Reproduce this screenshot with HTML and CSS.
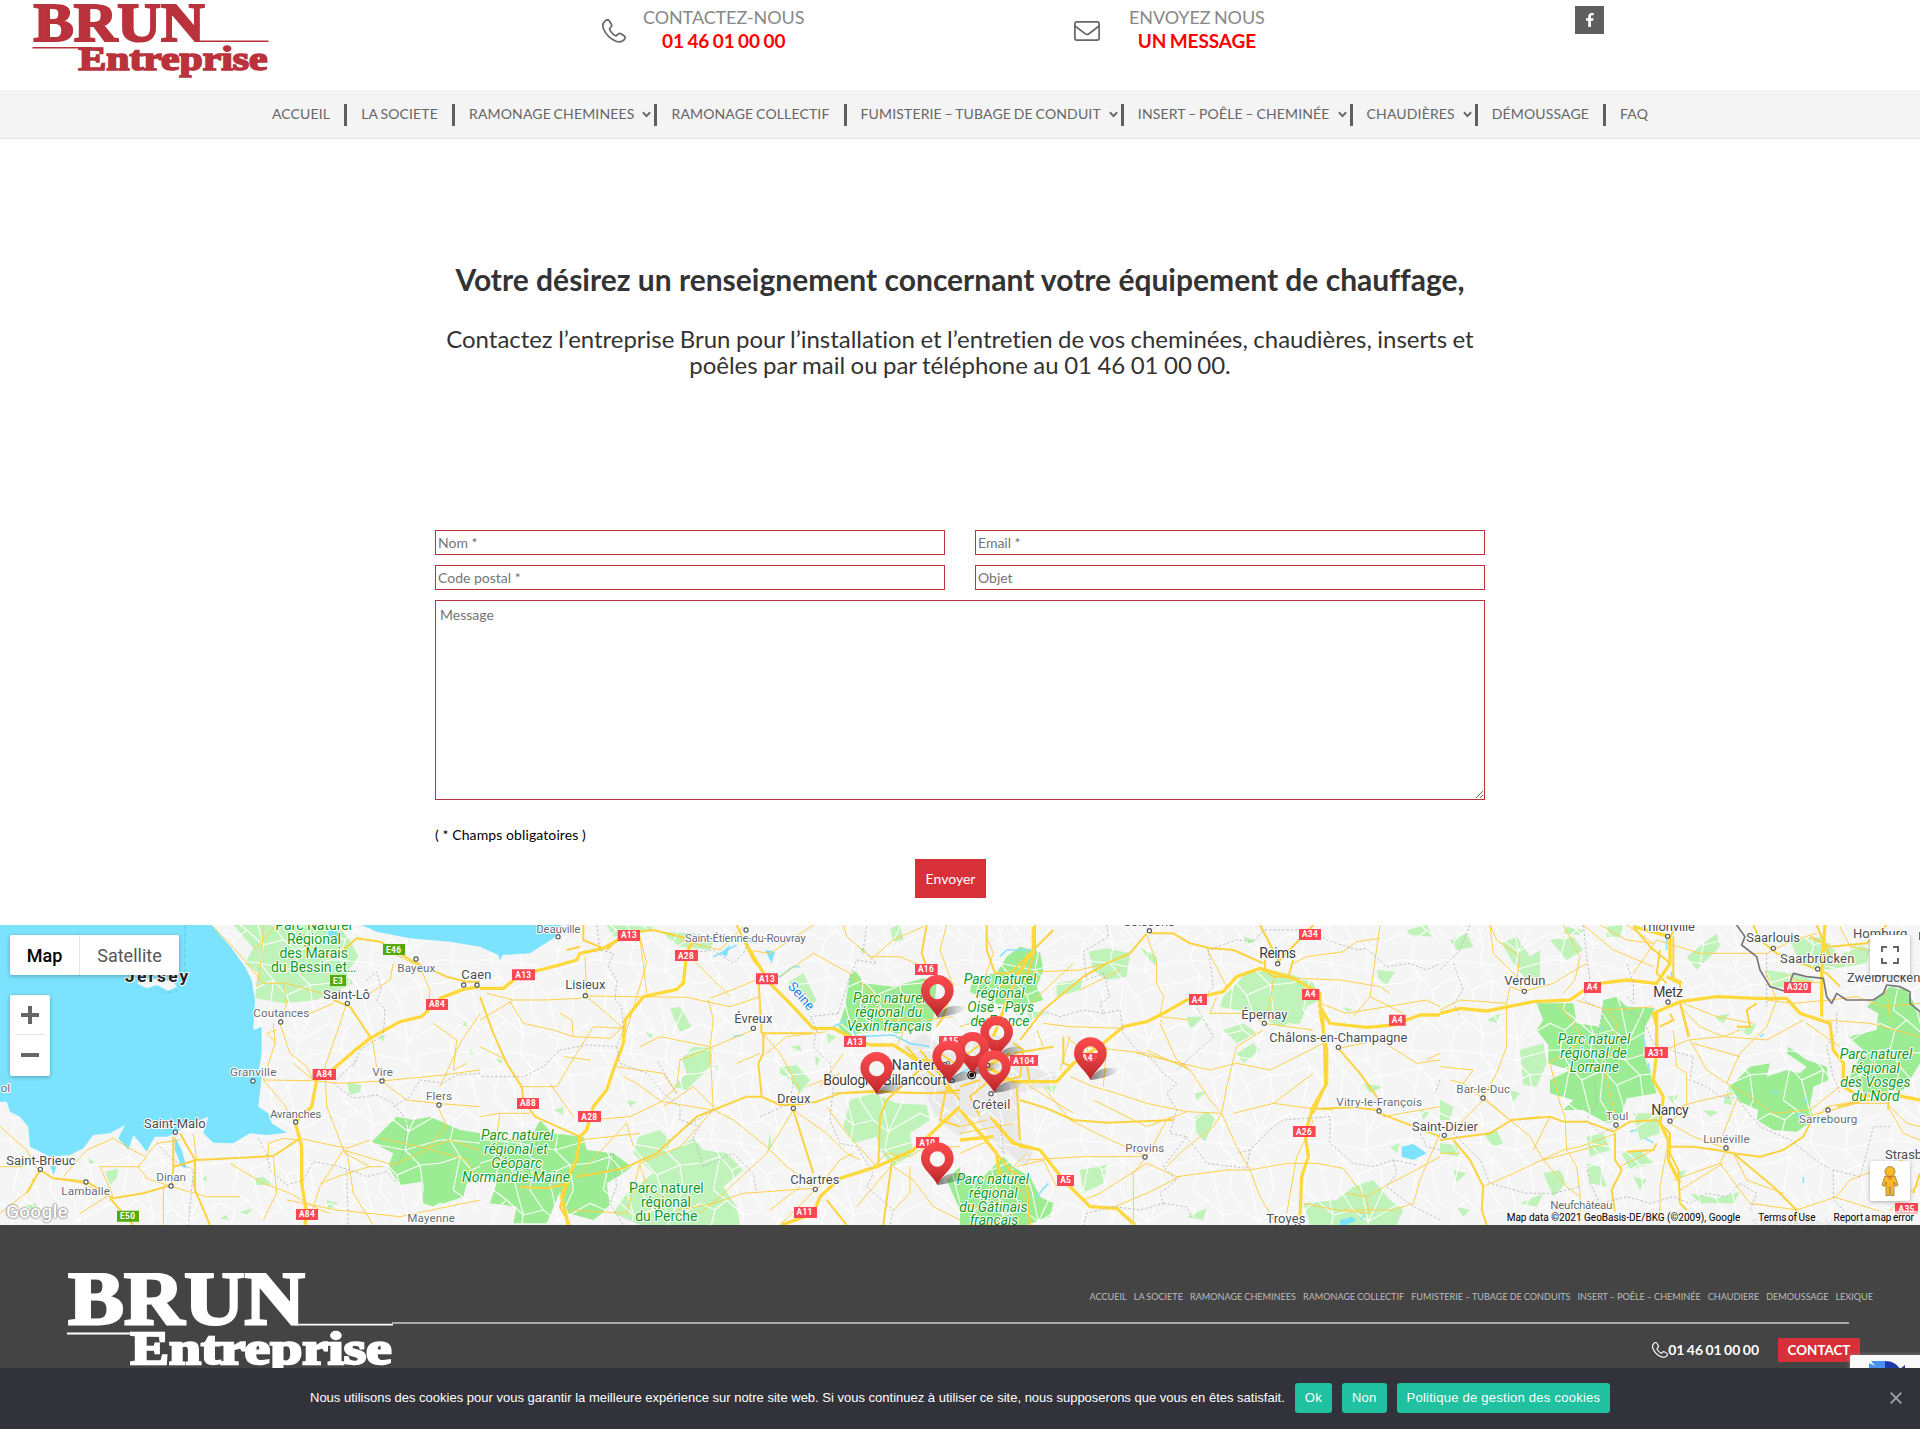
FILE: index.html
```html
<!DOCTYPE html>
<html lang="fr">
<head>
<meta charset="utf-8">
<title>Contact – Brun Entreprise</title>
<link rel="stylesheet" href="styles.css">
</head>
<body>
<svg class="defs" width="0" height="0" aria-hidden="true">
  <defs>
    <symbol id="logo" viewBox="0 0 236 78">
      <g fill="currentColor" font-family="'Liberation Serif', serif" font-weight="700">
        <text x="1" y="37" font-size="55" textLength="171" lengthAdjust="spacingAndGlyphs" stroke="currentColor" stroke-width="2">BRUN</text>
        <text x="46" y="66" font-size="33.5" textLength="189" lengthAdjust="spacingAndGlyphs" stroke="currentColor" stroke-width="1.7">Entreprise</text>
        <path d="M165 36.6h71v1.4h-71zM0 43h60v1.4H0z"/>
      </g>
    </symbol>
    <symbol id="phone" viewBox="0 0 24 24">
      <path d="M3.2 1.8C5 0.2 6.600 0.600 7.500 2.200L9.300 5.200C10 6.500 9.700 7.600 8.600 8.400C7.400 9.300 7.300 10.200 8.200 11.600C9.500 13.600 10.700 14.900 12.600 16.200C14 17.100 14.900 16.700 15.700 15.500C16.500 14.300 17.600 14 18.900 14.800L22 16.700C23.400 17.600 23.600 19.200 22.200 20.700C20 23 17.200 23.500 14 22.200C8 19.700 3.900 15.600 1.600 10C0.300 6.900 0.700 4 3.200 1.800Z" fill="none" stroke="currentColor" stroke-width="1.7"/>
    </symbol>
    <symbol id="pin" viewBox="-50 -128 140 132" overflow="visible">
      <path d="M0 0C15 -30 45 -38 75 -32C95 -25 70 -8 0 2Z" fill="url(#shade)"/>
      <path fill="url(#pinred)" fill-rule="evenodd" d="M0 1C-14 -28 -49 -48 -49 -77A49 49 0 0 1 49 -77C49 -48 14 -28 0 1ZM-23 -76A23 23 0 0 0 23 -76A23 23 0 0 0 -23 -76Z"/>
    </symbol>
    <linearGradient id="pinred" x1="0" y1="0" x2="0" y2="1"><stop offset="0" stop-color="#fb4a4d"/><stop offset=".6" stop-color="#dc3a3c"/><stop offset="1" stop-color="#b92227"/></linearGradient>
    <linearGradient id="shade"><stop offset="0" stop-color="#000" stop-opacity=".5"/><stop offset="1" stop-color="#000" stop-opacity=".03"/></linearGradient>
    <pattern id="lanes" width="330" height="270" patternUnits="userSpaceOnUse">
      <path d="M0 40L45 60L80 30L130 75L190 60L235 95L330 40M0 190L60 170L95 210L160 180L200 225L270 195L330 190M45 60L30 120L60 170L40 270M40 0L80 30M130 75L120 130L160 180L150 270M150 0L190 60M235 95L225 150L270 195L280 270M280 0L235 95M30 120L120 130L225 150L330 120M0 120L30 120M95 210L110 270M110 0L130 75M200 225L215 270M215 0L235 95" fill="none" stroke="#fff" stroke-width="3.2"/>
    </pattern>
  </defs>
</svg>

<header class="header">
  <svg class="header-logo" role="img" aria-label="Brun Entreprise"><use href="#logo"/></svg>
  <div class="blurb blurb-phone">
    <svg class="phone-icon"><use href="#phone"/></svg>
    <p>CONTACTEZ-NOUS<br><strong>01 46 01 00 00</strong></p>
  </div>
  <div class="blurb blurb-mail">
    <svg class="mail-icon" viewBox="0 0 26 20" fill="none" stroke="currentColor" stroke-width="1.7"><rect x=".9" y=".9" width="24.200" height="18.200" rx="2"/><path d="M1 5L11 12.700Q13 14.200 15 12.700L25 5"/></svg>
    <p>ENVOYEZ NOUS<br><strong>UN MESSAGE</strong></p>
  </div>
  <a class="facebook"><svg width="8" height="14" viewBox="0 0 8 14"><path fill="#fff" d="M2.200 14V7.700H0V5.200H2.200V3.500C2.200 1.300 3.500 0 5.600 0H7.700V2.300H6.300C5.300 2.300 5 2.800 5 3.600V5.200H7.600L7.200 7.700H5V14Z"/></svg></a>
</header>

<nav class="nav">
  <a>ACCUEIL</a>
  <a>LA SOCIETE</a>
  <a class="has-menu">RAMONAGE CHEMINEES<svg viewBox="0 0 8 6"><path d="M.8 1L4 4.400L7.200 1"/></svg></a>
  <a>RAMONAGE COLLECTIF</a>
  <a class="has-menu">FUMISTERIE – TUBAGE DE CONDUIT<svg viewBox="0 0 8 6"><path d="M.8 1L4 4.400L7.200 1"/></svg></a>
  <a class="has-menu">INSERT – POÊLE – CHEMINÉE<svg viewBox="0 0 8 6"><path d="M.8 1L4 4.400L7.200 1"/></svg></a>
  <a class="has-menu">CHAUDIÈRES<svg viewBox="0 0 8 6"><path d="M.8 1L4 4.400L7.200 1"/></svg></a>
  <a>DÉMOUSSAGE</a>
  <a>FAQ</a>
</nav>

<main class="content">
  <h1>Votre désirez un renseignement concernant votre équipement de chauffage,</h1>
  <h2>Contactez l’entreprise Brun pour l’installation et l’entretien de vos cheminées, chaudières, inserts et poêles par mail ou par téléphone au 01 46 01 00 00.</h2>
  <form class="form">
    <input placeholder="Nom *">
    <input placeholder="Email *">
    <input placeholder="Code postal *">
    <input placeholder="Objet">
    <textarea placeholder="Message"></textarea>
  </form>
  <p class="required">( * Champs obligatoires )</p>
  <button class="send">Envoyer</button>
</main>

<section class="map">
  <svg class="map-canvas" width="1920" height="300" viewBox="0 0 1920 300">
    <!-- Basse-Normandie, Bretagne -->
    <g transform="translate(0 -5) scale(.33333)">
      <path class="park" d="M700 15L760 85L735 130L775 160L765 235L850 250L950 240L1060 190L1040 160L1075 110L1050 60L1010 15ZM1040 485L1085 495L1080 515L1050 525ZM315 755L355 745L350 775L330 795ZM265 715L285 725L270 735ZM765 775L790 770L820 795H770ZM605 775L620 768V785ZM660 895L680 885L685 900ZM980 840L1015 850L985 870ZM80 855L110 850L100 880ZM1135 350L1155 345L1150 365ZM1410 390L1425 400L1412 405ZM1380 310L1400 300V320ZM720 875L760 865L740 885Z"/>
      <path class="park2" d="M1115 665L1190 590L1240 600L1290 590L1380 630L1440 640V780L1400 790L1390 830L1300 860L1270 850L1265 785L1200 795L1165 740L1180 700Z"/>
      <rect y="15" width="1440" height="900" fill="url(#lanes)"/>
      <path class="water" d="M0 15H635L665 50L695 85L735 140L755 180L765 240L760 330L785 320L785 400L775 460L785 470L775 560L805 580L815 610L860 638L800 645L750 640L700 670L640 668L610 640L625 590L560 615L525 640L500 650L465 650L450 675L440 695L425 675L400 645L385 690L355 655L375 615L330 640L280 645L250 685L210 705L150 710L90 680L85 620L60 590L30 575L20 545H0ZM1085 15L1130 35L1230 55L1350 65L1440 80V15ZM525 650L545 690L560 745L545 740L525 690ZM150 735L170 740L160 765ZM985 30L1030 40L1010 60L985 50Z"/>
      <path d="M410 190L450 175L520 185L530 200L505 212L470 195L440 205Z" fill="#f5f5f5"/>
      <path class="rd" d="M640 20L720 105L790 190L860 190L1000 230M760 90L830 15M790 15L785 110L770 200M850 190L860 250L840 310L870 400L920 440L940 480M820 310L825 370L790 480L940 482L1020 490L1145 483L1330 465L1440 450M830 330L800 340L830 370M1040 250L1010 340L975 440M1115 350L1130 440L1155 480M1250 120L1290 210L1285 280M1150 75L1180 100L1240 130L1300 150M1110 220L1170 180L1180 130M975 440L980 560L1000 610L1035 700L1110 740L1150 740M1145 483L1220 540L1310 550L1440 560M1310 550L1340 620L1280 685L1140 655M1280 690L1180 735L1030 690L960 800L930 890M820 710L830 820L790 900M900 655L1040 685L1110 660M690 730L790 790L870 820L960 870L990 880M585 720L580 800M440 710L415 740L440 775L515 800L620 830L720 830M0 620L80 690L120 760M0 740L70 740M260 690L190 770M260 690L340 655L380 680L435 710L470 670L540 660M160 775L250 790L320 830L240 880M490 800V915M580 640L590 720M340 830L300 740L420 740M1440 280L1380 370L1320 500M1300 310L1370 360L1360 450L1400 430M790 480L850 550L880 600M860 840L1010 870L1200 890L1440 840M1280 685L1400 720L1420 760M960 790L1040 760L1110 740M1280 685L1350 660L1440 690M940 480L880 430M805 710V670L850 655L900 660M100 775L90 810L0 880M1040 690L1060 820L1120 915M1000 250L930 280L850 290"/>
      <path class="rd2" d="M1030 90L1070 55L1140 65L1240 125L1340 170L1400 185H1440M1000 240L1050 260L1110 350M120 750L160 775L260 785L340 835L430 820L515 795L520 740L590 720L820 708L900 655M120 750L80 820M585 720V810L630 915M330 835L400 915M540 640L585 720M520 740V650M885 605L900 655"/>
      <path class="hw" d="M1440 200L1390 208L1320 235L1265 290L1200 305L1110 355L1060 395L990 455L950 480L935 560L885 605L905 680V790L920 880L915 915"/>
      <path class="border" d="M775 655L800 700L810 750L860 795L910 780L940 725L1000 735L1050 750L1100 770L1160 755L1190 790M1040 750L1045 915M470 670L520 720L580 750L565 915M1000 490L1060 535L1130 525L1180 550L1220 600L1215 680L1190 740M1060 440L1080 390L1150 345L1155 270L1130 240L1145 210L1130 155L1095 185M1440 460L1370 465L1330 490L1260 480L1230 530L1180 560M1010 480L1070 420"/>
      <path class="coast" d="M555 15V160L530 215L490 218L475 200"/>
      <path id="d1" class="dot" d="M1248 117h.1M842 306h.1M759 483h.1M1146 483h.1M1317 555h.1M887 606h.1M258 786h.1M513 798h.1M1042 250h.1M526 637h.1M121 748h.1M1431 195h.1"/><use href="#d1" class="hole"/>
      <g class="c2"><text x="1192" y="157" textLength="114">Bayeux</text><text x="760" y="291" textLength="168">Coutances</text><text x="690" y="469" textLength="139">Granville</text><text x="1117" y="469" textLength="62">Vire</text><text x="1278" y="540" textLength="78">Flers</text><text x="810" y="595" textLength="154">Avranches</text><text x="469" y="783" textLength="89">Dinan</text><text x="184" y="825" textLength="146">Lamballe</text><text x="2" y="515">ol</text><text x="1222" y="906" textLength="143">Mayenne</text></g>
      <g class="c1"><text x="969" y="236" textLength="141">Saint-Lô</text><text x="432" y="623" textLength="185">Saint-Malo</text><text x="19" y="734" textLength="208">Saint-Brieuc</text></g>
      <text class="island" x="375" y="186" textLength="190">Jersey</text>
      <g class="pk up"><text x="941" y="30" textLength="230">Parc Naturel</text><text x="942" y="72">Régional</text><text x="941" y="114">des Marais</text><text x="941" y="156" textLength="256">du Bessin et…</text></g>
      <path class="eroad" d="M1149 72h66v33h-66zM990 165h48v33h-48zM351 872h66v33h-66z"/>
      <path class="shield" d="M1278 237h66v33h-66zM938 447h70v33h-70zM888 867h66v33h-66z"/>
      <g class="st"><text x="1181" y="99">E46</text><text x="1014" y="192">E3</text><text x="383" y="897">E50</text><text x="1311" y="262">A84</text><text x="973" y="472">A84</text><text x="921" y="892">A84</text></g>
    </g>
    <!-- Normandie, Île-de-France -->
    <g transform="translate(480 -5) scale(.33333)">
      <path class="park2" d="M0 655L150 660L180 600L215 640L310 650L320 690L400 700L455 740L430 760L380 790L390 860L340 900L265 880L240 815L200 910L100 910L110 860L30 850L50 790L0 760ZM1110 165L1130 150L1150 190L1240 200L1330 175L1370 185L1360 300L1320 330L1250 340L1200 330L1100 350L1075 320L1095 260ZM1440 740L1400 780L1440 870Z"/>
      <path class="park" d="M475 650L540 630L570 660L560 700L640 655L670 690L740 700L790 750L730 800L770 860L780 915H480L400 880L440 820L520 760L460 700ZM605 415L640 380L700 385L690 440L620 510L580 500L620 460ZM1110 540L1180 520L1250 550L1340 555L1350 600L1290 640L1300 700L1240 740L1200 690L1190 650L1120 670L1090 620ZM570 265L600 260L635 320L600 335ZM900 440L950 435L990 480L960 520L930 480L900 460ZM920 190L970 160L1010 240L980 270ZM1040 340L1070 350L1045 370ZM495 335L520 345L510 355ZM40 415L70 420L60 430ZM220 570L250 560V585ZM870 635L875 680L860 700ZM930 380L960 375L965 395ZM380 15L520 20L510 35L400 50ZM540 35L640 40L700 60L690 90L600 80ZM1140 80L1160 90L1145 105ZM1230 25L1260 15L1270 60L1240 65ZM700 440L720 435L715 450ZM440 540L470 545L450 560ZM1005 405L1020 420L1008 440Z"/>
      <path d="M1270 380L1330 340L1400 390L1440 380V650L1370 600L1330 500Z" fill="#e9e9e9"/>
      <rect y="15" width="1440" height="900" fill="url(#lanes)"/>
      <path class="water" d="M0 15V80L55 105L60 122L68 105L150 100L220 55L245 15ZM855 90L885 95L875 130ZM720 100L750 75L740 110Z"/>
      <path class="river" d="M860 165L900 170L940 140L960 140M1060 320L1100 300L1130 350L1240 345L1290 370L1350 380M760 350L790 345M800 60L830 70M700 110L770 75"/>
      <path class="rd" d="M315 110L320 220M20 220L100 240L200 240L300 235L320 228L460 230L620 232L750 260L840 230M320 230L380 280L430 325M90 245L130 310L220 330L280 350L390 355L430 320M280 350L275 300L240 280M120 500L230 500L290 400L340 320L430 325M210 490L280 590M0 590L60 580L150 580M60 580L50 650M430 470L470 490L545 545L450 590L330 600M545 545L700 570L690 380L700 300L685 240M545 545L590 500L600 420L700 380L820 330M700 570L600 680L480 730L440 880L270 870M480 735L500 800L600 870L700 850L790 820L1000 805M700 570L760 600L860 680L920 740L1000 800M940 570L860 700L720 830L660 880M940 570L1040 640L1100 700L1140 720M840 330L900 400L960 510L940 560M770 430L840 400M860 400L920 350L1040 335M480 380L540 350L690 380M790 20L720 90L600 60M480 60L490 130L500 220M620 100L750 230M850 170L780 200L690 235M480 50L500 130L410 430M1000 100L900 170M1000 100L1110 160L1200 240M1000 15L870 100L800 90M1020 500L1090 400M1060 520L1190 510L1280 520L1440 520M1170 120L1240 60L1330 20M1170 110L1100 50L1090 15M1170 110L1260 110L1330 140M1350 230L1290 290L1250 380M1190 740L1100 640L1040 560M1010 810L1080 720L1120 700M1180 740L1220 700L1290 710L1380 650M1130 860L1240 730L1290 690M1240 740L1300 780L1360 860L1440 900M1290 740L1290 820L1240 870M1190 250L1200 300L1340 300L1420 290M410 440L550 460L590 520M300 660L480 640M290 770L440 610L460 680M0 380L80 420M330 420L250 410M1400 15L1380 90L1420 200M1390 600L1440 560M1380 680L1440 680M0 300L100 240M700 560L640 500L550 560M980 500L1080 460M870 870L960 800M1005 810L900 915"/>
      <path class="rd2" d="M0 230L40 340L80 430L125 500L130 540L165 590L300 650M290 770L350 760L430 745L530 700L650 590L700 570L800 530L845 530L900 555H940L1010 545L1080 520L1190 515L1360 520L1440 510M940 570L1000 760M270 790L200 805L120 800M260 800L240 860L270 915M845 340H940L1000 340M850 340V400L835 430L845 530M835 170L845 340M770 15L820 120L845 150M640 60L520 30L430 40L380 90M300 80L260 90M310 15V60L370 85M1195 740L1200 590L1220 540L1340 430M1235 730L1210 915M1340 15L1325 100L1340 140M1420 190L1390 290L1370 320M1320 390L1440 540M1400 500L1380 600L1440 620M1280 380L1340 450L1420 520M1330 450L1380 400L1440 440M1040 840L1100 915"/>
      <path class="hw" d="M0 205H70L120 165L220 140L290 120L300 100L370 85L440 45M640 60L620 100L610 190L590 208L490 230L435 300L430 370L400 450L380 510L340 560L320 630L300 650L290 720L265 770L245 830L265 915M785 50L845 150L870 190L930 250L1000 325H1060L1130 360L1170 375H1240L1310 420L1400 430M905 915L1000 880L1020 830L1080 775L1190 740L1300 690L1440 560"/>
      <path class="border" d="M350 15L360 90L400 100L385 140L410 180L405 240L425 260L430 330L410 380L320 375L240 390L190 440L130 470L0 470M410 380L420 430L500 460L550 520L600 560L600 600L660 620L640 650L670 740L760 700L820 760L830 820M400 700L410 800L390 850L430 915M620 620L700 570M1075 280L1110 170L1130 120L1190 130L1150 90L1160 15M1075 280L990 290L1010 330L1000 380L1050 430L1060 500L1050 600L1080 670L1130 680L1180 760L1160 800L1240 870L1230 915M660 95L700 90L760 130L790 100L810 60M170 670L150 730L130 800M840 590L930 550L940 480M590 520L530 420"/>
      <path id="d2" class="dot" d="M-49 195h.1M316 227h.1M820 325h.1M940 565h.1M1006 808h.1M234 50h.1M798 30h.1M1416 482h.1M1402 430h.1"/><use href="#d2" class="hole"/>
      <g class="c2"><text x="169" y="38" textLength="132">Deauville</text><text x="615" y="66" textLength="362">Saint-Étienne-du-Rouvray</text></g>
      <g class="c1"><text x="-56" y="176" textLength="90">Caen</text><text x="256" y="208" textLength="120">Lisieux</text><text x="763" y="308" textLength="114">Évreux</text><text x="891" y="550" textLength="100">Dreux</text><text x="931" y="791" textLength="147">Chartres</text></g>
      <g class="c0"><text x="1235" y="450" textLength="170">Nanterre</text><text x="1030" y="494" textLength="370">Boulogne-Billancourt</text></g>
      <text class="seine" transform="translate(922 200) rotate(49)">Seine</text>
      <g class="pk it"><text x="112" y="660">Parc naturel</text><text x="108" y="702">régional et</text><text x="110" y="744">Géoparc</text><text x="108" y="786">Normandie-Maine</text><text x="1228" y="250">Parc naturel</text><text x="1226" y="292">régional du</text><text x="1228" y="334">Vexin français</text></g>
      <g class="pk up"><text x="559" y="819">Parc naturel</text><text x="558" y="861">régional</text><text x="559" y="903">du Perche</text></g>
      <path class="shield" d="M413 30h67v33h-67zM585 90h69v33h-69zM828 160h66v33h-66zM96 148h69v33h-69zM1305 132h68v33h-68zM1092 348h66v33h-66zM1377 348h70v33h-70zM111 534h66v33h-66zM294 573h69v33h-69zM1308 651h69v33h-69zM942 861h69v33h-69z"/>
      <g class="st"><text x="447" y="55">A13</text><text x="618" y="116">A28</text><text x="861" y="186">A13</text><text x="130" y="174">A13</text><text x="1338" y="157">A16</text><text x="1125" y="374">A13</text><text x="1412" y="373">A15</text><text x="144" y="559">A88</text><text x="328" y="599">A28</text><text x="1342" y="677">A10</text><text x="974" y="886">A11</text></g>
    </g>
    <!-- Champagne -->
    <g transform="translate(960 -5) scale(.33333)">
      <path class="park2" d="M140 110L180 80L240 95L250 150L230 200L250 240L180 260L100 250L30 215L40 170L110 160ZM0 760L60 780L130 710L160 740L210 770L240 830L280 850L270 890L200 915H0Z"/>
      <path class="park" d="M385 95L440 85L510 100L500 170L440 180L400 150ZM790 230L860 160L930 150L1000 165L1060 190L1080 240L1040 260L1020 310L960 320L880 280L780 260ZM1030 850L1130 840L1180 800L1240 780L1290 840L1330 870L1310 915H1050ZM705 590L740 570L765 595L735 665L710 640ZM790 330L850 310L890 340L830 370ZM290 190L370 175L360 210L290 230ZM830 400L880 370L900 390L850 430ZM540 80L590 110V140L560 110ZM1340 30L1400 15L1420 50L1350 45ZM850 50L890 60L860 75ZM680 290L730 290L690 330ZM60 605L110 600L120 630L80 640ZM360 750L440 735L430 790L370 820ZM200 270L260 280L210 300ZM1250 150L1305 155L1280 195L1255 175ZM1150 260L1180 270L1160 275ZM250 500L290 495L280 520ZM1380 570L1410 575L1390 600ZM700 520L740 515L710 540ZM1290 680L1320 670L1310 700ZM680 890L740 865L730 900ZM1210 490L1270 500L1230 520Z"/>
      <path d="M0 370L90 340L180 370L200 440L290 460V490L180 520V660L220 700L200 740L120 690L50 600L0 650Z" fill="#e9e9e9"/>
      <rect y="15" width="1440" height="900" fill="url(#lanes)"/>
      <path class="water" d="M1325 680L1360 672L1400 700L1360 720L1325 710ZM1140 900L1175 890L1190 900L1160 915H1140Z"/>
      <path class="river" d="M0 460L40 440M120 110L140 90H230M230 830L265 790M1200 900L1215 885"/>
      <path class="rd" d="M80 50L100 100L75 170M130 160L360 150L440 130M560 45L590 130V190L610 230L600 290L690 300M250 310L330 320L490 325M320 350L400 420M400 450L380 380L560 400L680 440M430 500L440 380M530 400L620 420L750 450L830 430L930 450L1090 370M600 310L650 420L690 450L750 540L780 575M800 500L785 580L680 575L560 550L470 520L400 500L330 470M800 500L830 380L910 330M785 580L760 620L670 690L620 740M785 580L830 680L870 750M870 750L800 750L650 770L560 730M870 750L980 730H1070L1150 745M870 750L900 830L950 915M820 580L940 550L1060 460M940 550L1050 565L1120 570M620 600L560 710L520 760V915M620 600L680 575M560 710L370 710L200 720M560 730L420 820L370 840M440 870L560 820L660 770M250 500L330 600L430 650L560 710M180 480L340 580M910 310L930 250L940 180M770 230L750 280L870 280L910 310L1060 330M1010 175L1140 180L1260 200L1290 220M1000 130L1040 110L1150 95L1190 65L1260 55M1260 15L1230 230L1180 290M1080 250L1160 280L1400 240L1440 260M1135 385L1260 360L1370 430L1440 420M1230 230L1330 280M600 300L610 310M80 600L0 620M0 640L160 610M0 700L90 660M170 740L250 720L290 800M1440 640L1380 780L1360 850L1300 870H1150M1150 745L1220 840L1230 880L1130 870L1030 850M1160 820L1220 830L1290 790L1350 760L1440 710M980 880L1010 710L1040 650L1060 600M1270 590L1440 560M690 450L560 390M100 290L0 320M230 330L250 380M1400 420L1440 400M330 350L300 450M200 700L150 750L200 850M150 740L100 840M640 590L560 620L400 540M340 130L200 260M480 150L360 210M740 85L800 200"/>
      <path class="rd2" d="M80 15L80 90L105 160L150 160L220 90L280 30M225 15V90L200 170L120 200M560 40L510 100L440 130L370 170L250 270L180 360M570 40H640L690 70L750 85L820 90L910 130M900 15L960 130M960 120L1060 15M915 120V150L940 170L985 170L1000 120M1135 385L1200 460L1250 530L1260 580L1440 650M1050 567L1180 562L1250 570M1090 280L1095 500L1060 580M180 540L260 565L340 600L440 608L640 600M90 590L130 640L180 680L240 690M180 660L170 500M0 500L60 480M60 590L30 530L90 480M160 370L190 390L180 470L100 490M160 400L280 380M200 430L210 490M310 350V430L340 440M90 350L0 420M110 700L150 750L200 780L210 915"/>
      <path class="hw" d="M150 400L80 440L160 485L290 485L340 430L430 370L490 320L560 305L610 280L680 240L790 215L830 170L900 145L1000 175L1080 220L1080 260L1110 310L1220 322L1300 315L1380 285H1440M1080 270L1100 390V490L1060 560L1035 640L1045 710L1025 770L1020 890M0 570L60 640L110 700L120 780M0 660L100 650M100 600L160 670L240 690L310 780L390 860L470 865L525 915M220 20V90L170 170L100 350"/>
      <path class="border" d="M440 15L445 50L370 95L380 180L430 160L450 230L420 250L430 280L370 270L300 290L240 270M430 280L480 270L490 340L530 390L580 420L610 460L650 490L620 520L650 570L630 640L680 650L610 740L650 780L600 820L610 850L540 870L460 860L380 880L370 915M610 850L680 860L700 900M680 650L740 730L860 745L870 690L940 620L970 600L1110 590V670L1180 730L1240 740L1300 720L1370 735M870 690L830 700M740 315L760 350L650 450M740 315L710 260L760 200L745 90L830 60L880 65L910 30L1060 30L1100 60L1190 90L1220 85L1280 140L1350 130L1400 150L1440 130M1380 640L1400 680L1440 690M1300 720L1310 760L1280 800L1360 860L1440 900M130 700L120 600M1440 480L1425 520"/>
      <path id="d3" class="dot" d="M568 32h.1M913 310h.1M1135 382h.1M1257 573h.1M555 711h.1M93 521h.1M953 131h.1M83 436h.1M1013 915h.1"/><use href="#d3" class="hole"/>
      <circle cx="35" cy="465" r="9" fill="#111" stroke="#fff" stroke-width="3"/><circle cx="35" cy="465" r="12" fill="none" stroke="#111" stroke-width="3"/>
      <g class="c2"><text x="1129" y="559" textLength="257">Vitry-le-François</text><text x="496" y="696" textLength="117">Provins</text></g>
      <g class="c1"><text x="490" y="19" textLength="154">Soissons</text><text x="844" y="296" textLength="138">Épernay</text><text x="928" y="367" textLength="414">Châlons-en-Champagne</text><text x="919" y="910" textLength="117">Troyes</text><text x="37" y="566" textLength="114">Créteil</text></g>
      <g class="c0"><text x="898" y="113" textLength="110">Reims</text></g>
      <g class="pk it"><text x="120" y="192">Parc naturel</text><text x="121" y="234">régional</text><text x="122" y="276">Oise - Pays</text><text x="120" y="318">de France</text><text x="98" y="792">Parc naturel</text><text x="100" y="834">régional</text><text x="100" y="876">du Gâtinais</text><text x="102" y="916">français</text></g>
      <path class="shield" d="M1017 27h66v33h-66zM1026 207h52v33h-52zM687 222h54v33h-54zM1287 284h50v33h-50zM150 405h84v33h-84zM366 399h50v33h-50zM999 618h68v33h-68zM291 765h51v33h-51z"/>
      <g class="st"><text x="1050" y="52">A34</text><text x="1051" y="232">A4</text><text x="712" y="248">A4</text><text x="1312" y="309">A4</text><text x="192" y="431">A104</text><text x="382" y="424">A4</text><text x="1032" y="644">A26</text><text x="317" y="790">A5</text></g>
    </g>
    <!-- Lorraine -->
    <g transform="translate(1440 -5) scale(.33333)">
      <path class="park2" d="M290 250L400 250L410 310L480 320L490 240L530 230L560 260L645 265L615 320L610 400L650 520L560 535L540 600L500 610L430 570L370 570L400 540L330 520L330 480L390 450L325 430L325 375L290 330L310 300ZM870 500L930 440L990 430L980 470L1040 450L1080 460L1100 440L1040 400L1045 380L1100 420L1160 440L1165 480L1120 500L1110 560L1120 600L1070 635L1000 630L950 600L955 570L900 545ZM1225 350L1310 330L1315 280L1280 260L1350 200L1400 210L1440 280V430L1390 510L1270 520L1230 470L1270 390Z"/>
      <path class="park" d="M185 70L230 50L270 110L300 90V170L260 180L220 130ZM330 60L400 50L430 90L380 120ZM240 390L310 370L320 430L290 500L250 495ZM580 580L650 580L660 640L600 660ZM310 760L360 750L380 790L340 830ZM440 650L490 640L510 690L450 710ZM545 700L600 690L640 730L570 750ZM750 820L830 835L900 815L880 850L780 850ZM740 110L830 40L840 80L770 150ZM980 150L1050 160L1120 180L1110 210L1000 200ZM1050 60L1150 50L1200 110L1250 70L1290 90L1280 130L1160 150L1080 130ZM0 670L50 675L60 710L0 700ZM0 540L40 560L30 600H0ZM40 750L80 760L50 785ZM130 640L170 630L190 670L160 680ZM380 20L430 30L420 45L370 40ZM210 510L240 520L220 545ZM790 570L840 575L810 590ZM870 490L850 550L880 555ZM440 730L480 740L500 800L450 790ZM140 300L180 280L170 310ZM820 290L870 280L850 310ZM50 860L90 870L70 890ZM500 20L550 15L540 50L500 50ZM240 850L310 820L290 860ZM700 760L740 750L720 780ZM900 330L950 310L930 350ZM30 60L80 40L100 80L50 90ZM580 770L620 780L600 810ZM680 530L715 525L700 550Z"/>
      <rect y="15" width="1440" height="900" fill="url(#lanes)"/>
      <path class="river" d="M680 50V90M695 155V175M610 350L620 400M625 430L630 460M480 330L490 320M400 420L415 425M430 400L440 430M960 350L972 342M995 518H1012M1093 530L1100 550M1065 590L1085 580M615 655L640 668M570 635L590 630M1090 790V770"/>
      <path class="rd" d="M0 270L60 240L200 250L210 200L250 215L340 190L440 130M250 215L230 180L240 110L170 60L150 15M200 250L200 380L170 460L130 530L210 600M370 15L420 110L405 180L370 220M360 255L400 310L430 360L330 430L360 550L375 590L380 690L410 740L420 820V915M410 240L500 270L580 265L640 260M500 270L530 310L520 380L490 420L510 520L530 600M560 15L640 70M430 15L520 90L640 140M580 160L650 60L780 100L980 100L1060 60L1130 40M700 170L730 190M720 260L780 320L850 350L980 360L1090 300M650 400L745 360L850 350L900 330M700 330L710 440L740 460L740 550L700 600M750 360L800 450L860 490L930 530L1000 580L1110 570L1200 500M860 490L900 400L980 320L1010 240L975 150M720 560L770 545L880 520M720 240L750 350M730 250L830 290L940 310M890 540L850 640L860 690L840 730L700 780M690 610L760 650L870 690M840 730L930 850L1070 870L1190 830L1230 780L1440 700M680 690L660 800V915M530 640L420 680L370 690L220 760L130 800M70 490L210 600L270 650L310 720L380 800L420 830M130 540L70 600L40 640M310 720L500 670M540 740L640 690M720 810L850 730M880 700L920 780L1030 820M1110 610L1160 560L1270 540M1160 580L1190 600M1200 380L1100 310M1160 300L1290 310L1440 350M1170 240L1250 230L1330 260L1440 250M1340 210L1350 310M1350 570L1390 640L1440 660M1350 560L1400 610L1440 620M1100 590L1250 550L1350 550M30 480L70 490L100 450L0 440M1440 790L1340 880L1180 830M0 700L60 700M900 410L760 370M210 600L300 590M1040 160L1060 180L1150 190M1200 20L1230 80L1280 90M980 240L1060 250L1170 240M280 690L330 590M150 15L160 100L240 180M480 15L560 60L640 70"/>
      <path class="rd2" d="M0 660L150 640L215 600L330 590L370 605L440 605L520 635L570 605L650 600M525 640V720L545 750L515 810L525 880M650 600L690 640V700L715 750L720 850L740 870M685 680H760L830 690L880 700L960 710L1030 690L1090 650L1110 610M650 670L640 690L560 695M40 660L90 720L130 800L125 870L140 915M690 130V50L710 20M690 130L630 80L580 20M680 190L650 160L660 90M720 180V230M690 280L700 300L660 320M720 250L745 350M880 700L1000 800L1070 870V915M950 250L920 270L930 320L890 320M1030 120L1080 130L1170 110L1130 15M1110 50L1170 80L1280 70L1340 15M940 15L960 60L1010 100L1160 160L1200 200M1190 560L1280 540H1340M1345 570V540M1420 820L1440 760M700 50V180"/>
      <path class="hw" d="M0 280L60 265L140 273L280 245L390 240L440 205L480 190L560 180L650 190L690 130V50L580 20M680 170L720 190M650 320L640 280L720 245L830 230L950 235H1040L1080 280L1170 310L1180 390L1210 430L1210 500L1260 530L1340 520L1440 540M650 280V400L640 480L670 530L660 610L685 660V720L720 790M1155 15L1145 160V290"/>
      <path class="border" d="M430 15L440 110L450 180L430 240L470 260M90 15L60 90L0 150M40 130L70 210L40 250L60 290M560 230L580 250V190L560 130M540 260L610 300L640 370L720 400L760 410L750 480L800 500L840 530L890 535M490 260L460 420L470 550L440 600L480 640L530 620M890 535L960 620L1050 660L1140 730L1180 750L1260 770L1280 700L1300 620L1350 620M1180 750V840L1240 900M900 790L950 820L930 870L990 910M900 790L860 830L800 820L750 850L700 830L630 850L560 830L480 850L450 790L440 740M1190 280V340L1160 380L1180 470L1200 520M40 640L120 720L150 790L260 820L340 820L420 800M980 100V260"/>
      <path class="nation" d="M890 15L915 50L905 75L950 110L960 150L990 200L1040 215L1060 160L1100 170L1150 175L1160 230L1175 250L1190 220L1220 240H1300L1330 220L1340 195L1380 200L1410 215L1410 250L1440 275"/>
      <path id="d4" class="dot" d="M683 49h.1M253 214h.1M684 246h.1M129 534h.1M13 646h.1M528 615h.1M690 603h.1M858 684h.1M1164 570h.1M1000 85h.1M1133 147h.1"/><use href="#d4" class="hole"/>
      <g class="c2"><text x="49" y="519" textLength="161">Bar-le-Duc</text><text x="497" y="600" textLength="68">Toul</text><text x="790" y="669" textLength="139">Lunéville</text><text x="1077" y="610" textLength="175">Sarrebourg</text><text x="331" y="867" textLength="186">Neufchâteau</text><text x="936" y="922" textLength="336" opacity=".6">Saint-Dié-des-Vosges</text></g>
      <g class="c1"><text x="-84" y="632" textLength="198">Saint-Dizier</text><text x="193" y="196" textLength="123">Verdun</text><text x="602" y="33" textLength="163">Thionville</text><text x="919" y="67" textLength="161">Saarlouis</text><text x="1239" y="55" textLength="163">Homburg</text><text x="1020" y="128" textLength="223">Saarbrücken</text><text x="1221" y="185" textLength="220">Zweibrücken</text><text x="1335" y="716">Strasbourg</text></g>
      <g class="c0"><text x="640" y="230" textLength="89">Metz</text><text x="634" y="585" textLength="112">Nancy</text></g>
      <g class="pk it"><text x="462" y="372">Parc naturel</text><text x="461" y="414">régional de</text><text x="463" y="456">Lorraine</text><text x="1308" y="417">Parc naturel</text><text x="1307" y="459">régional</text><text x="1306" y="501">des Vosges</text><text x="1307" y="543">du Nord</text></g>
      <path class="shield" d="M432 186h51v33h-51zM1032 186h81v33h-81zM614 381h70v33h-70zM1365 849h69v33h-69z"/>
      <g class="st"><text x="457" y="211">A4</text><text x="1073" y="211">A320</text><text x="648" y="408">A31</text><text x="1400" y="876">A35</text></g>
      <path d="M1437 36h3v24h-3z" fill="#1a7fd4"/>
    </g>
    <!-- Repères des agences -->
    <g transform="translate(480 -5) scale(.33333)">
      <use href="#pin" x="1322" y="163" width="140" height="132"/>
      <use href="#pin" x="1500" y="286" width="140" height="132"/>
      <use href="#pin" x="1428" y="334" width="140" height="132"/>
      <use href="#pin" x="1356" y="360" width="140" height="132"/>
      <use href="#pin" x="1781" y="350" width="140" height="132"/>
      <use href="#pin" x="1493" y="389" width="140" height="132"/>
      <use href="#pin" x="1140" y="394" width="140" height="132"/>
      <use href="#pin" x="1322" y="665" width="140" height="132"/>
    </g>
  </svg>
  <div class="map-type"><b>Map</b><span>Satellite</span></div>
  <div class="zoom"><i class="plus"></i><i class="minus"></i></div>
  <div class="tile fullscreen"><svg width="18" height="18" viewBox="0 0 18 18" fill="none" stroke="#666" stroke-width="2"><path d="M1 6V1H6M12 1H17V6M17 12V17H12M6 17H1V12"/></svg></div>
  <div class="tile pegman"><svg width="18" height="30" viewBox="0 0 18 30" fill="#fbb829" stroke="#8a6a2a" stroke-width=".7"><path d="M4 10H14L17 19L14.500 20.500L13 16V29.500H9.600V21H8.400V29.500H5V16L3.500 20.500L1 19Z"/><path d="M5.500 10H12.500L9 14.500Z" fill="#e58a1f" stroke="none"/><circle cx="9" cy="5.500" r="5"/></svg></div>
  <span class="google">Google</span>
  <div class="credits"><span>Map data ©2021 GeoBasis-DE/BKG (©2009), Google</span><a>Terms of Use</a><a>Report a map error</a></div>
</section>

<footer class="footer">
  <svg class="footer-logo" role="img" aria-label="Brun Entreprise"><use href="#logo"/></svg>
  <div class="footer-main">
    <nav class="footer-nav"><a>ACCUEIL</a><a>LA SOCIETE</a><a>RAMONAGE CHEMINEES</a><a>RAMONAGE COLLECTIF</a><a>FUMISTERIE – TUBAGE DE CONDUITS</a><a>INSERT – POÊLE – CHEMINÉE</a><a>CHAUDIERE</a><a>DEMOUSSAGE</a><a>LEXIQUE</a></nav>
    <hr class="rule">
    <div class="footer-contact"><svg width="16" height="16"><use href="#phone"/></svg><span>01 46 01 00 00</span><a class="contact">CONTACT</a></div>
  </div>
</footer>

<div class="captcha"><svg width="36" height="36" viewBox="0 0 36 36"><path fill="#4a90f5" d="M0 2L6 5L2 0H16V9C10 9 7 14 9 18H0Z"/><path fill="#1c3aa9" d="M16 0C23 0 28 3 31 8L36 4V20H20L26 14C23 10 20 9 16 9Z"/></svg></div>
<div class="cookies">
  <span>Nous utilisons des cookies pour vous garantir la meilleure expérience sur notre site web. Si vous continuez à utiliser ce site, nous supposerons que vous en êtes satisfait.</span>
  <a>Ok</a><a>Non</a><a>Politique de gestion des cookies</a>
  <svg class="close" width="12" height="12" viewBox="0 0 12 12" stroke="#a5a5a8" stroke-width="1.700"><path d="M.7 .7L11.300 11.300M11.300 .7L.7 11.300"/></svg>
</div>
</body>
</html>
```
FILE: styles.css
```css
* { box-sizing: border-box; }
body { margin: 0; height: 1429px; overflow: hidden; font-family: Lato, sans-serif; font-size: 14px; font-variant-ligatures: none; color: #666; background: #fff; position: relative; }
.defs { position: absolute; }

.header { height: 90px; display: grid; grid-template-columns: 602px 471px 502px 1fr; align-items: start; }
.header-logo { width: 237px; height: 78px; margin: 4px 0 0 32px; color: #ba323b; }
.blurb { display: flex; color: #888; }
.blurb p { margin: 5px 0 0; font-size: 18px; line-height: 24px; text-align: center; letter-spacing: -.1px; word-spacing: -1px; }
.blurb strong { color: #f00; font-size: 19px; font-weight: 700; }
.phone-icon { width: 24px; height: 24px; margin: 19px 17px 0 0; color: #666; }
.mail-icon { width: 26px; height: 20px; margin: 21px 29px 0 1px; color: #666; }
.facebook { width: 29px; height: 28px; margin-top: 6px; background: #5f5f5f; display: flex; align-items: center; justify-content: center; }

.nav { height: 49px; background: #f4f4f4; border-bottom: 1px solid #e2e2e2; display: flex; justify-content: center; align-items: flex-start; padding-top: 14px; letter-spacing: .15px; word-spacing: -1px; }
.nav a { display: flex; align-items: center; height: 22px; padding: 0 14px 3px; border-right: 3px solid #5f5f5f; white-space: nowrap; }
.nav a:last-child { border: 0; }
.nav .has-menu { padding-right: 3px; }
.nav svg { width: 9px; height: 7px; margin: 2px 0 0 8px; fill: none; stroke: #666; stroke-width: 1.7; }

.content { width: 1050px; height: 786px; margin: 0 auto; color: #333; }
h1 { margin: 0; padding-top: 122px; font-size: 30px; line-height: 36px; font-weight: 700; text-align: center; white-space: nowrap; }
h2 { margin: 29px 0 0; font-size: 24px; line-height: 26px; font-weight: 400; text-align: center; letter-spacing: -.03px; word-spacing: -.6px; }
.form { margin-top: 152px; display: grid; grid-template-columns: 1fr 1fr; gap: 10px 30px; }
.form input, .form textarea { margin: 0; border: 1px solid #ba323b; font: 14px Lato, sans-serif; background: #fff; }
.form input { height: 25px; padding: 1px 2px; }
.form textarea { grid-column: 1 / 3; height: 200px; padding: 5px 4px; }
::placeholder { color: #757575; }
.required { margin: 26px 0 0; color: #000; line-height: 18px; letter-spacing: .1px; }
.send { display: block; width: 71px; height: 39px; margin: 15px 0 0 480px; padding: 0; border: 0; background: #d83038; color: #fff; font: 14px Lato, sans-serif; }

.map { position: relative; height: 300px; overflow: hidden; background: #f5f5f5; font-family: Roboto, sans-serif; }
.map-canvas { display: block; }
.park { fill: #c0f3ba; }
.park2 { fill: #9bec92; }
.water { fill: #7ce3ff; }
.river { fill: none; stroke: #8be3fb; stroke-width: 5; }
.rd, .rd2, .hw, .border, .coast, .nation { fill: none; stroke-linejoin: round; }
.rd { stroke: #fdd04a; stroke-width: 3; }
.rd2 { stroke: #fdd23f; stroke-width: 6; }
.hw { stroke: #ffd93b; stroke-width: 10; }
.border { stroke: #b0b0b4; stroke-width: 2.4; stroke-dasharray: 7 6; }
.coast { stroke: #56b8e4; stroke-width: 2; stroke-dasharray: 14 8; }
.nation { stroke: #77777b; stroke-width: 5; }
.dot { fill: none; stroke: var(--ring, #555a60); stroke-width: var(--size, 16); stroke-linecap: round; }
.hole { --ring: #fff; --size: 9; }
.map text { stroke: #fff; stroke-width: 6px; paint-order: stroke; stroke-linejoin: round; }
.c2 { font-size: 35px; fill: #666c76; }
.c1 { font-size: 39px; fill: #4a4d52; }
.c0 { font-size: 42px; fill: #3a3a3c; }
.pk { font-size: 42px; fill: #109a24; text-anchor: middle; }
.it { font-style: italic; }
.seine { font-size: 40px; fill: #1a80e5; }
.map .island { font-size: 52px; font-weight: 700; fill: #222; }
.shield { fill: #fb4653; }
.eroad { fill: #54a90b; }
.map .st text { fill: #fff; stroke: none; font-size: 25px; font-weight: 700; text-anchor: middle; letter-spacing: 1px; }

.map-type, .zoom, .tile { position: absolute; background: #fff; border-radius: 2px; box-shadow: 0 1px 4px rgba(0,0,0,.3); }
.map-type { left: 10px; top: 10px; width: 169px; height: 40px; display: flex; font-size: 18px; line-height: 41px; text-align: center; color: #565656; }
.map-type b { width: 70px; color: #000; font-weight: 500; border-right: 1px solid #e6e6e6; }
.map-type span { flex: 1; }
.zoom { left: 10px; top: 70px; width: 40px; height: 81px; }
.zoom i { display: block; height: 40px; background: linear-gradient(#666, #666) center / 18px 4px no-repeat; }
.zoom .plus { background: linear-gradient(#666, #666) center / 18px 4px no-repeat, linear-gradient(#666, #666) center / 4px 18px no-repeat, linear-gradient(#e6e6e6, #e6e6e6) center bottom / 30px 1px no-repeat; }
.tile { right: 10px; width: 40px; height: 40px; display: flex; align-items: center; justify-content: center; }
.fullscreen { top: 10px; }
.pegman { top: 236px; }
.google { position: absolute; left: 6px; top: 275px; font: 500 19px/24px Roboto, sans-serif; letter-spacing: .3px; color: #fff; text-shadow: 0 0 2px #888, 0 0 2px #888, 0 0 1px #777; }
.credits { position: absolute; right: 0; bottom: 0; height: 14px; padding: 0 6px; display: flex; gap: 18px; font-size: 10px; line-height: 14px; color: #000; background: rgba(245,245,245,.7); white-space: nowrap; }
.credits a { word-spacing: -1px; }

.footer { height: 204px; background: #444; color: #bbb; display: flex; }
.footer-logo { width: 326px; height: 108px; margin: 48px 0 0 67px; color: #fff; flex: none; }
.footer-main { flex: 1; padding: 66px 0 0; }
.footer-nav { display: flex; justify-content: flex-end; gap: 7px; padding-right: 47px; font-size: 9.1px; line-height: 12px; word-spacing: -.35px; }
.rule { margin: 19px 71px 0 -1px; border: 0; height: 2px; background: #aaa; }
.footer-contact { display: flex; justify-content: flex-end; align-items: center; margin: 14px 60px 0 0; height: 24px; line-height: 22px; color: #fff; font-weight: 700; word-spacing: -1px; }
.contact { width: 82px; height: 24px; margin-left: 19px; line-height: 24px; font-size: 13.4px; text-align: center; background: #d83038; }

.captcha { position: absolute; left: 1850px; top: 1355px; width: 80px; height: 60px; padding: 6px 0 0 19px; background: #f9f9f9; border-radius: 2px; box-shadow: 0 0 5px #808080; }
.cookies { position: absolute; left: 0; right: 0; top: 1368px; height: 61px; background: #32323a; color: #fff; font: 13px "Liberation Sans", sans-serif; display: flex; align-items: center; padding: 0 0 2px 310px; white-space: nowrap; }
.cookies a { height: 30px; margin-left: 10px; padding: 0 10px; line-height: 30px; border-radius: 3px; background: #20c1a0; letter-spacing: .25px; }
.close { margin-left: auto; margin-right: 18px; }
```
